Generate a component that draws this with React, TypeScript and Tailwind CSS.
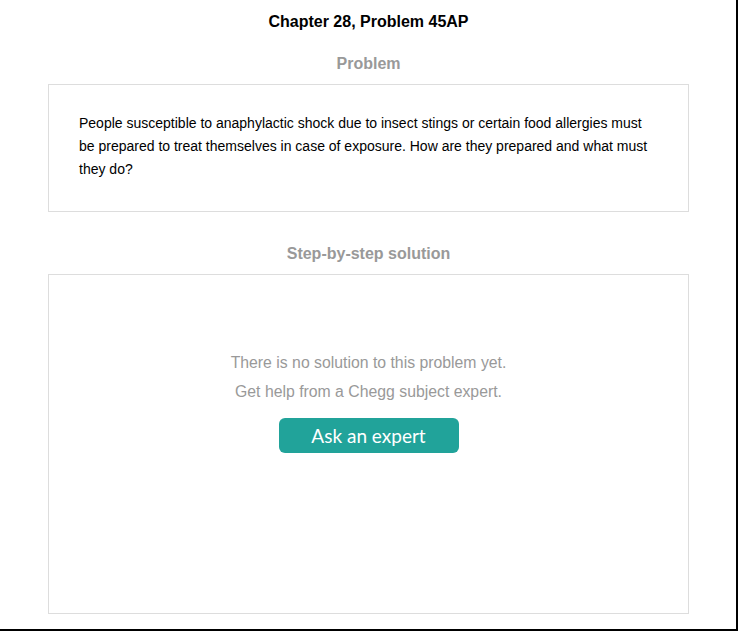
const ProblemCard = ({ text }: { text: string }) => (
  <div className="border border-[#dddddd] bg-white pl-[30px] pr-[30px] pt-[27px] pb-[30px]">
    <p className="text-[14px] leading-[23px] text-black">{text}</p>
  </div>
);

const App = () => {
  return (
    <div
      className="w-[738px] h-[631px] bg-white border-r-2 border-b-2 border-black overflow-hidden"
      style={{ fontFamily: '"Liberation Sans", Arial, sans-serif' }}
    >
      <div className="w-[641px] ml-[48px] pt-[12px]">
        <h1 className="text-center text-[16px] leading-[20px] font-bold text-black">
          Chapter 28, Problem 45AP
        </h1>

        <h2 className="mt-[22px] text-center text-[16px] leading-[20px] font-bold text-[#999999]">
          Problem
        </h2>
        <div className="mt-[10px]">
          <ProblemCard text="People susceptible to anaphylactic shock due to insect stings or certain food allergies must be prepared to treat themselves in case of exposure. How are they prepared and what must they do?" />
        </div>

        <h2 className="mt-[32px] text-center text-[16px] leading-[20px] font-bold text-[#999999]">
          Step-by-step solution
        </h2>
        <div className="mt-[10px] h-[340px] border border-[#dddddd] flex flex-col items-center pt-[73px]">
          <p className="text-[15.8px] leading-[29px] text-[#999999] text-center">
            There is no solution to this problem yet.
            <br />
            Get help from a Chegg subject expert.
          </p>
          <button
            className="mt-[12px] w-[180px] h-[35px] rounded-[6px] bg-[#21a39a] text-white text-[19px] leading-[35px]"
            style={{ fontFamily: 'Lato, "Open Sans", sans-serif' }}
          >
            Ask an expert
          </button>
        </div>
      </div>
    </div>
  );
};

export default App;
